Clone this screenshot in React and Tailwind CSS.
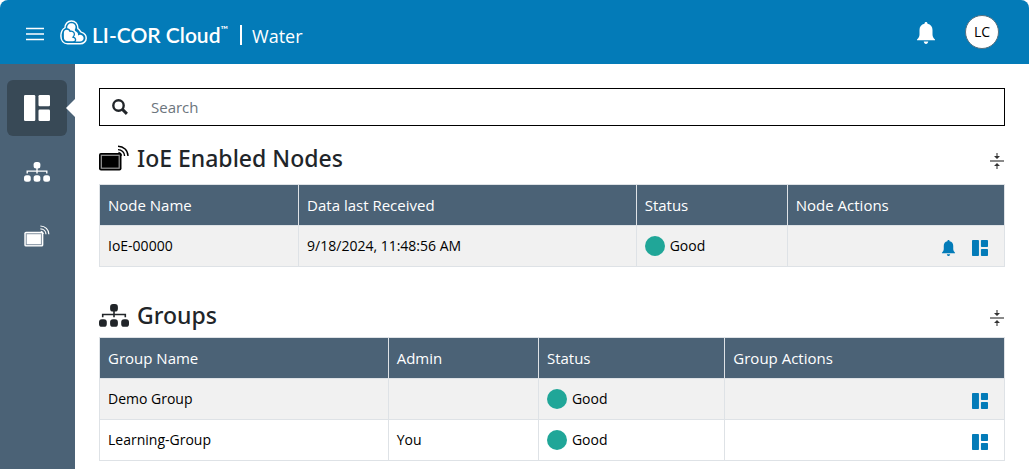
import React from "react";

const MenuIcon = () => (
  <svg className="h-4 w-[18px]" viewBox="0 0 18 16" fill="none" stroke="currentColor" strokeWidth="1.3">
    <path d="M0 2.5h18M0 8h18M0 13.5h18" />
  </svg>
);

const CloudLogo = () => (
  <svg className="h-[25px] w-[27px]" viewBox="0 0 27 25" fill="none">
    <path
      d="M7.600 23.800h12.600c3.400 0 6-2.500 6-5.600 0-2.900-1.900-5-4.500-5.800-1-.3-1.500-1-1.900-1.900-.4-.9-1.100-1.500-1.900-1.900C17.900 3.800 15.200.9 11.400.9 7.600.9 4.900 3.900 5 7.900 2.400 9.500.9 12 .9 15.900c0 4.600 2.600 7.900 6.700 7.900Z"
      stroke="#fff"
      strokeWidth="1.500"
    />
    <path
      d="M7.300 8.200C6.900 5.300 8.800 3.200 11.400 3.200c2.700 0 4.500 2 4.100 4.300-.2 1.300-.9 2.100-.6 3 .3.900 1.800 1.200 2.600 2.300.6.800.7 1.700.5 2.600 2.300-1.500 5.600-.2 5.600 2.700 0 2-1.500 3.500-3.600 3.500h-8L7.300 8.200Z"
      fill="#fff"
    />
    <path
      d="M3.200 13c0-2.400 1.600-4 3.700-4 1.600 0 2.700.9 3.100 2.300 2.200-.6 4.400.7 4.400 2.900 0 1.300-.7 2.100-1.400 2.900 1.600.4 2.600 1.400 2.600 2.700 0 1.500-1.300 2.200-2.900 2.200H8.100c-3 0-4.900-2.100-4.900-5V13Z"
      fill="#fff"
      stroke="#037bb8"
      strokeWidth="1.300"
    />
  </svg>
);

const BellIcon = ({ className }) => (
  <svg className={className} viewBox="0 0 18 22" fill="currentColor">
    <path d="M9 0c.9 0 1.500.6 1.500 1.500v.3c3.300.6 5 3.100 5 6.200v4.400c0 1.900 1 3.600 2.500 5V18.300H0v-.9c1.500-1.400 2.500-3.100 2.500-5V8c0-3.100 1.700-5.600 5-6.200v-.3C7.500.6 8.100 0 9 0ZM6.700 19.600h4.600C11 21.100 10.200 22 9 22s-2-.9-2.300-2.400Z" />
  </svg>
);

const DashboardIcon = ({ className }) => (
  <svg className={className} viewBox="0 0 26 26" fill="currentColor">
    <rect width="11.300" height="26" rx="1.300" />
    <rect x="14.500" width="11.500" height="11.300" rx="1.300" />
    <rect x="14.500" y="14.500" width="11.500" height="11.500" rx="1.300" />
  </svg>
);

const SitemapIcon = ({ className }) => (
  <svg className={className} viewBox="0 0 30 23" fill="currentColor">
    <rect x="11.100" y="0" width="7.800" height="7.600" rx="2.900" />
    <rect x="0" y="15.200" width="7.800" height="7.600" rx="2.900" />
    <rect x="11.100" y="15.200" width="7.800" height="7.600" rx="2.900" />
    <rect x="22.200" y="15.200" width="7.800" height="7.600" rx="2.900" />
    <path d="M3.700 13.200V10.500h22.600v2.700M15 7v6.200" fill="none" stroke="currentColor" strokeWidth="1.600" />
  </svg>
);

const NodeIcon = ({ className, bezel }) => (
  <svg className={className} viewBox="0 0 30 26" fill="none">
    <rect x="0" y="8" width="22.500" height="17.500" rx="2" fill="currentColor" />
    <rect x="2.300" y="10.300" width="17.900" height="12.900" stroke={bezel} strokeWidth="1.200" />
    <path
      d="M19 1.200c5.600 0 10 4.200 10 9.800M19 4.600c3.700 0 6.600 2.700 6.600 6.400M19.500 7.400c1.700.4 2.700 1.500 3 3.200"
      stroke="currentColor"
      strokeWidth="1.400"
    />
  </svg>
);

const SearchIcon = () => (
  <svg className="size-4" viewBox="0 0 16 16" fill="none" stroke="#212529">
    <circle cx="6.500" cy="6.500" r="5.200" strokeWidth="2.400" />
    <path d="m10.400 10.400 4.500 4.500" strokeWidth="2.900" />
  </svg>
);

const CollapseIcon = () => (
  <svg className="h-4 w-3.5" viewBox="0 0 14 16">
    <path d="M0 8h14" stroke="#8a8a8a" strokeWidth="2" />
    <path d="M7 0v4M7 12v4" stroke="#777" strokeWidth="1.600" />
    <path d="M4 3h6L7 6ZM4 13h6l-3-3Z" fill="#333" />
  </svg>
);

function StatusBadge() {
  return (
    <span className="flex items-center gap-[5px]">
      <span className="size-5 rounded-full bg-[#20a698]" />
      Good
    </span>
  );
}

function DataTable({ headers, widths, rows }) {
  return (
    <table className="w-full table-fixed border-collapse border border-[#dee2e6] text-left text-[15px] leading-6 text-black">
      <colgroup>
        {widths.map((w, i) => (
          <col key={i} className={w} />
        ))}
      </colgroup>
      <thead>
        <tr className="bg-[#4b6276] text-white">
          {headers.map((h) => (
            <th key={h} className="h-[41px] border border-[#dee2e6] px-2 font-normal">
              {h}
            </th>
          ))}
        </tr>
      </thead>
      <tbody>
        {rows.map((row, r) => (
          <tr key={r} className="odd:bg-[#f1f1f1]">
            {row.map((cell, c) => (
              <td key={c} className="h-[41px] border border-[#dee2e6] px-2 text-sm leading-6">
                {cell}
              </td>
            ))}
          </tr>
        ))}
      </tbody>
    </table>
  );
}

function Actions({ bell }) {
  return (
    <span className="flex items-center justify-end gap-4 pt-1 pr-2 text-[#037bb8]">
      {bell && (
        <button type="button" aria-label="Alerts">
          <BellIcon className="block h-4 w-[15px]" />
        </button>
      )}
      <button type="button" aria-label="Dashboard">
        <DashboardIcon className="block size-4" />
      </button>
    </span>
  );
}

function SectionHeading({ icon, title }) {
  return (
    <div className="flex items-center justify-between">
      <h2 className="flex items-center gap-2 font-['Noto_Sans',sans-serif] text-[23px] leading-9 font-medium text-[#212529]">
        {icon}
        {title}
      </h2>
      <button type="button" aria-label={`Collapse ${title}`} className="pt-1.5 pr-px">
        <CollapseIcon />
      </button>
    </div>
  );
}

export default function App() {
  return (
    <div className="flex min-h-screen flex-col bg-white font-['Open_Sans','Noto_Sans',sans-serif]">
      <header className="flex h-16 items-center justify-between rounded-t-lg bg-[#037bb8] pr-[30px] pl-[26px] text-white">
        <div className="flex items-center">
          <button type="button" aria-label="Menu" className="pt-1">
            <MenuIcon />
          </button>
          <a href="#home" className="ml-4 flex items-center">
            <CloudLogo />
            <span className="ml-[5px] flex pt-1.5 font-['Lato',sans-serif] text-[21px] leading-7 font-semibold">
              LI-COR Cloud
              <span className="text-[10px] leading-4">™</span>
            </span>
            <span className="mt-1.5 ml-3 h-5 w-0.5 bg-white" />
            <span className="ml-2.5 pt-2 text-lg leading-7">Water</span>
          </a>
        </div>
        <div className="flex items-center gap-[30px]">
          <button type="button" aria-label="Notifications" className="pt-0.5">
            <BellIcon className="block h-[22px] w-[18px]" />
          </button>
          <button
            type="button"
            className="size-[34px] rounded-full border border-[#56707f] bg-white text-sm text-black"
          >
            LC
          </button>
        </div>
      </header>

      <div className="flex grow">
        <nav className="flex w-[75px] shrink-0 flex-col items-center bg-[#4b6276] pt-4 text-white">
          <a
            href="#dashboard"
            aria-label="Dashboard"
            className="relative mr-px flex h-14 w-[60px] items-center justify-center rounded-md bg-[#384956]"
          >
            <DashboardIcon className="size-[26px]" />
            <svg className="absolute top-[19px] -right-2 h-[18px] w-[9px]" viewBox="0 0 9 18" fill="#fff">
              <path d="M9 0v18L0 9Z" />
            </svg>
          </a>
          <a href="#groups" aria-label="Groups" className="mt-1 mr-px flex h-16 items-center">
            <SitemapIcon className="h-5 w-[26px]" />
          </a>
          <a href="#nodes" aria-label="Nodes" className="mr-px flex h-16 items-center">
            <NodeIcon className="h-[22px] w-[26px]" bezel="#8795a3" />
          </a>
        </nav>

        <main className="flex min-w-0 grow flex-col px-6 pt-6">
          <label className="flex h-[38px] items-center gap-[23px] border border-black pl-3">
            <SearchIcon />
            <input
              type="search"
              placeholder="Search"
              aria-label="Search"
              className="grow bg-transparent text-[15px] outline-none placeholder:text-[#6c757d]"
            />
          </label>

          <section className="flex flex-col gap-2 pt-3.5">
            <SectionHeading
              icon={<NodeIcon className="h-[26px] w-[30px] text-black" bezel="#999" />}
              title="IoE Enabled Nodes"
            />
            <DataTable
              widths={["w-[22%]", "w-[37.3%]", "w-[16.7%]", "w-[24%]"]}
              headers={["Node Name", "Data last Received", "Status", "Node Actions"]}
              rows={[["IoE-00000", "9/18/2024, 11:48:56 AM", <StatusBadge />, <Actions bell />]]}
            />
          </section>

          <section className="flex flex-col gap-1 pt-[30px]">
            <SectionHeading icon={<SitemapIcon className="h-[23px] w-[30px]" />} title="Groups" />
            <DataTable
              widths={["w-[31.9%]", "w-[16.6%]", "w-[20.6%]", "w-[30.9%]"]}
              headers={["Group Name", "Admin", "Status", "Group Actions"]}
              rows={[
                ["Demo Group", "", <StatusBadge />, <Actions />],
                ["Learning-Group", "You", <StatusBadge />, <Actions />],
              ]}
            />
          </section>
        </main>
      </div>
    </div>
  );
}
